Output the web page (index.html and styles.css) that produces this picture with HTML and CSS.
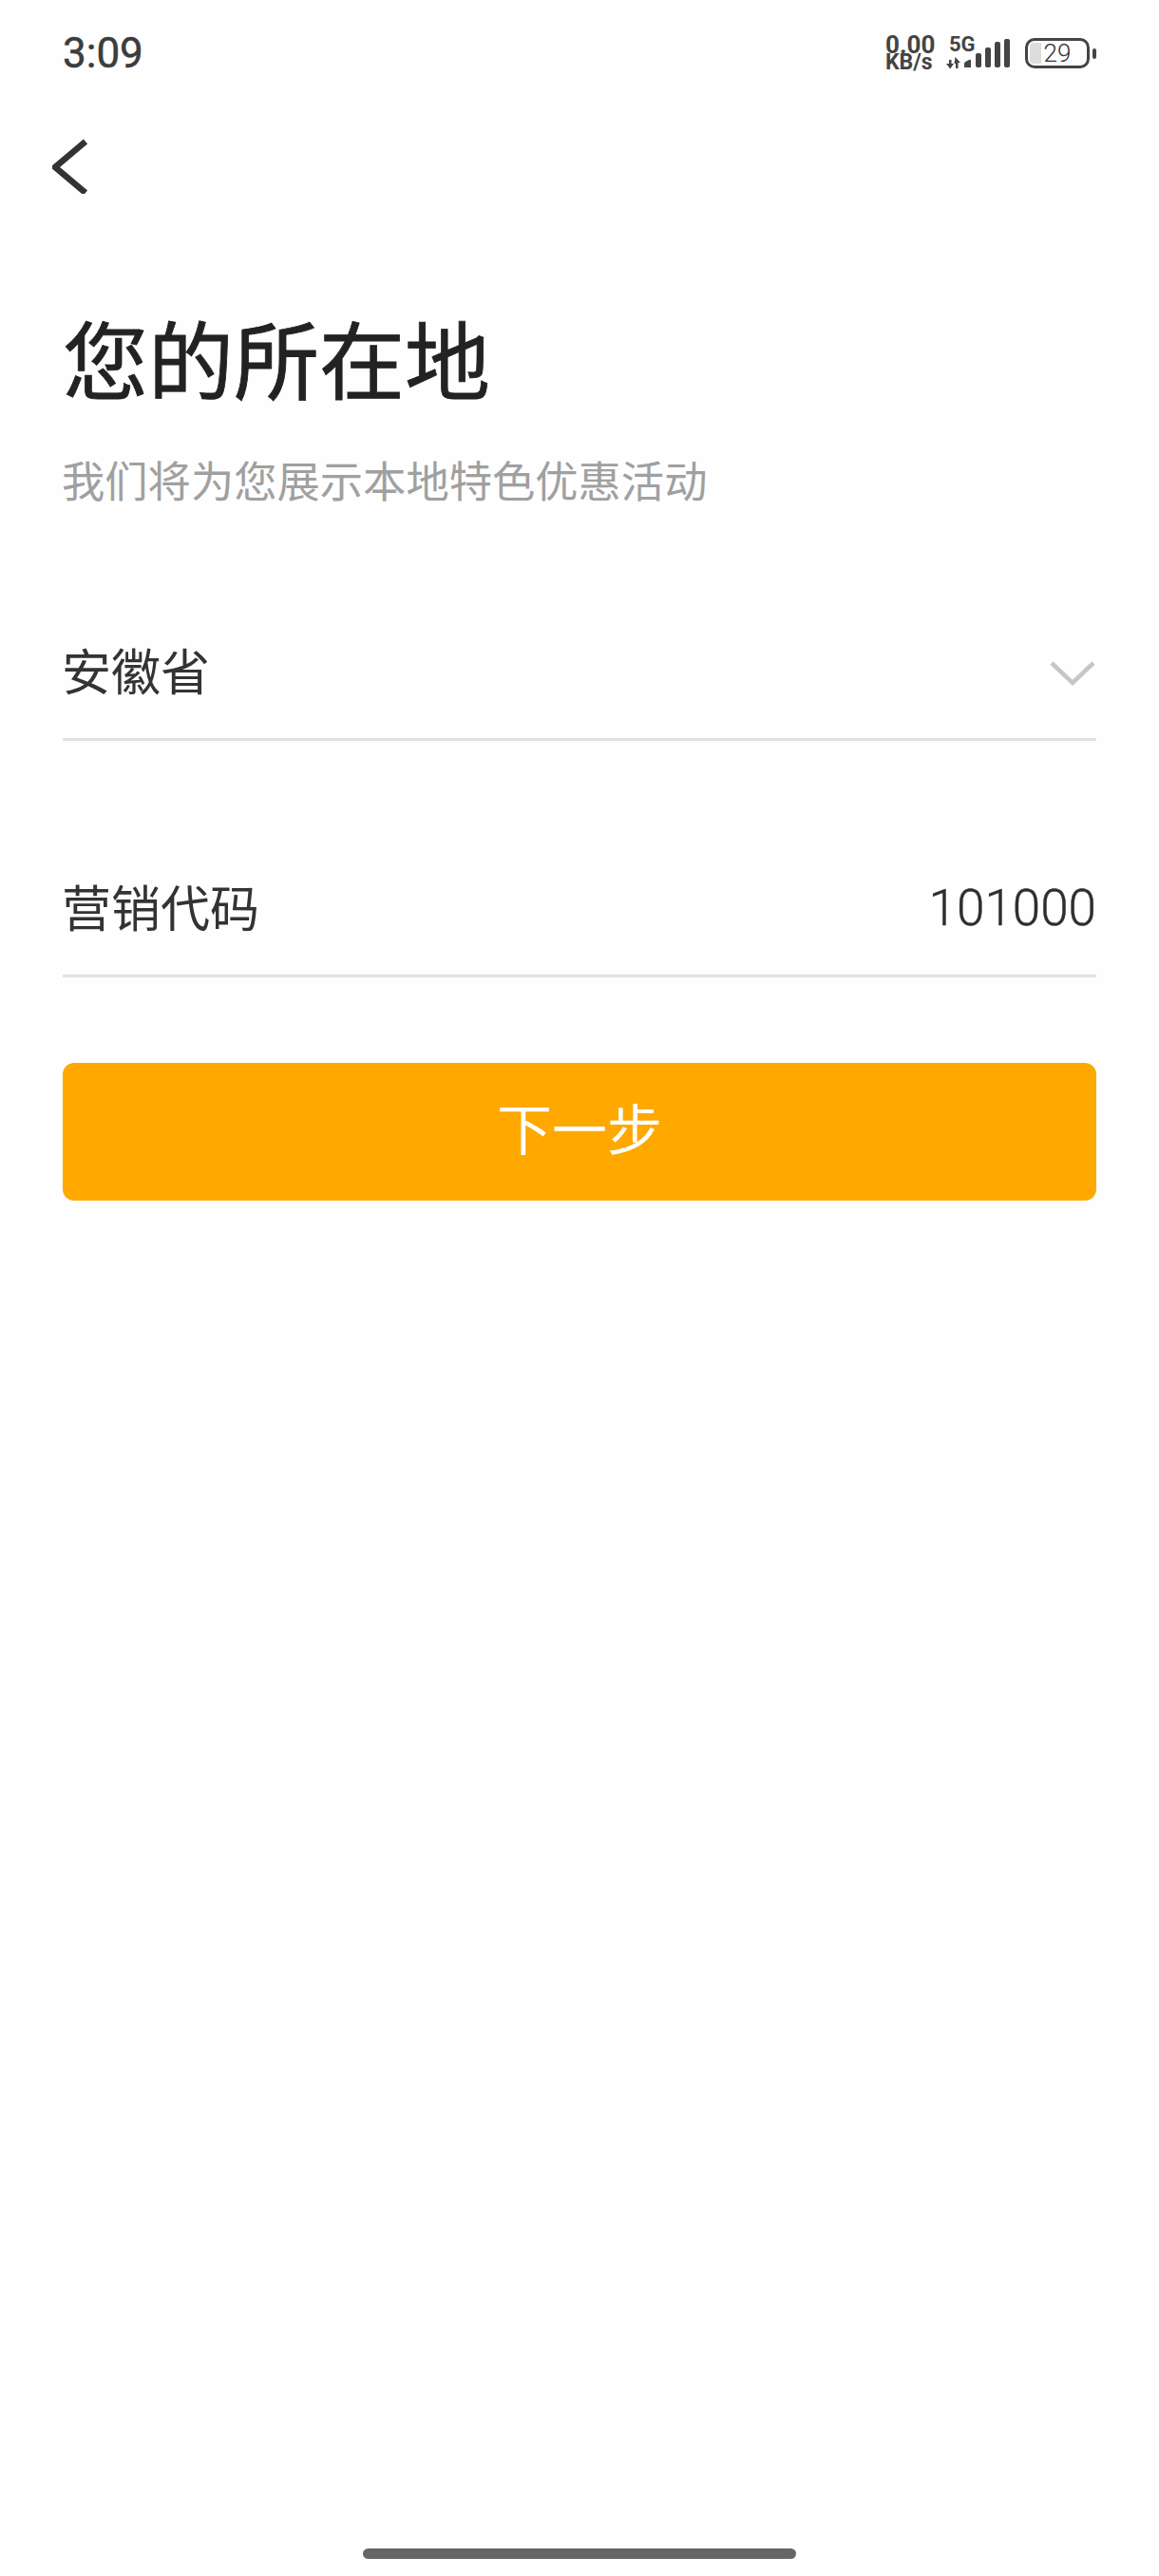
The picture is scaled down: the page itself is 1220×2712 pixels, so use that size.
FILE: index.html
```html
<!DOCTYPE html>
<html lang="zh-CN">
<head>
<meta charset="utf-8">
<title>您的所在地</title>
<link rel="stylesheet" href="styles.css">
</head>
<body>
<div class="page">
  <header class="status">
    <span class="time">3:09</span>
    <div class="status-right">
      <div class="speed"><span class="speed-num">0.00</span><span class="speed-unit">KB/s</span></div>
      <div class="net">
        <span class="net-label">5G</span>
        <svg class="net-arrows" width="16" height="13" viewBox="0 0 16 13"><path d="M3 3h2.500v4H8l-3.800 5.500L0 7h3zM9.500 0L15 6h-2.500v6H10V7H8.500z" fill="#444"/></svg>
      </div>
      <svg class="signal" width="48" height="31" viewBox="0 0 48 31"><g fill="#444"><path d="M0 30v-4q0-1 1-1.800l4-2.200q2-1 2 1v7z"/><rect x="12" y="15" width="6" height="15" rx="2"/><rect x="22" y="9" width="6" height="21" rx="2"/><rect x="32" y="3" width="6" height="27" rx="2"/><rect x="42" y="0" width="6" height="30" rx="2"/></g></svg>
      <div class="battery">
        <div class="battery-body"><span class="battery-fill"></span><span class="battery-text">29</span></div>
        <span class="battery-nub"></span>
      </div>
    </div>
  </header>

  <nav class="nav">
    <svg class="back" width="38" height="58" viewBox="0 0 38 58"><path d="M35 3L3 30l32 27" fill="none" stroke="#333" stroke-width="6.500"/></svg>
  </nav>

  <main class="content">
    <h1 class="title">您的所在地</h1>
    <p class="subtitle">我们将为您展示本地特色优惠活动</p>

    <div class="field field-select">
      <span class="field-label">安徽省</span>
      <svg class="chevron" width="48" height="28" viewBox="0 0 48 28"><path d="M2 3l22 21L46 3" fill="none" stroke="#c6c6c6" stroke-width="4.500"/></svg>
    </div>
    <div class="field field-code">
      <span class="field-label">营销代码</span>
      <span class="field-value">101000</span>
    </div>

    <button class="next" type="button">下一步</button>
  </main>

  <footer class="home"><span class="home-bar"></span></footer>
</div>
</body>
</html>
```
FILE: styles.css
```css
* { box-sizing: border-box; }
html, body { margin: 0; padding: 0; background: #fff; }
body { font-family: "Noto Sans CJK SC", "Noto Sans", sans-serif; }
.page { width: 1220px; height: 2712px; display: flex; flex-direction: column; background: #fefefe; }

.status { height: 112px; padding: 34px 66px 0 66px; display: flex; justify-content: space-between; align-items: flex-start; }
.time { font-family: Roboto, sans-serif; font-weight: 400; font-size: 44px; line-height: 44px; color: #3c3c3c; -webkit-text-stroke: 0.5px #3c3c3c; }
.status-right { display: flex; align-items: flex-start; padding-top: 4px; }
.speed { width: 52px; display: flex; flex-direction: column; font-family: Roboto, sans-serif; font-weight: 700; color: #444; }
.speed-num { font-size: 26px; line-height: 19px; }
.speed-unit { font-size: 23px; line-height: 17px; }
.net { width: 19px; margin-left: 12px; display: flex; flex-direction: column; }
.net-label { width: 30px; margin-left: 3px; font-family: Roboto, sans-serif; font-weight: 700; font-size: 22px; line-height: 17px; color: #444; }
.net-arrows { margin-top: 5px; }
.signal { margin-top: 3px; }
.battery { display: flex; align-items: center; margin-left: 16px; margin-top: 2px; height: 32px; }
.battery-body { position: relative; width: 68px; height: 32px; border: 3px solid #444; border-radius: 10px; display: flex; align-items: center; justify-content: center; }
.battery-fill { position: absolute; left: 2px; top: 2px; bottom: 2px; width: 12px; background: #ddd; border-radius: 4px 0 0 4px; }
.battery-text { position: relative; font-family: Roboto, sans-serif; font-weight: 300; font-size: 26px; line-height: 26px; color: #333; }
.battery-nub { width: 4px; height: 11px; margin-left: 3px; background: #444; border-radius: 2px; }

.nav { height: 60px; padding-left: 55px; padding-top: 34px; }
.back { display: block; }

.content { padding: 0 66px 0 66px; }
.title { margin: 149px 0 0; font-size: 90px; line-height: 108px; font-weight: 400; color: #222; -webkit-text-stroke: 0.8px #222; }
.subtitle { margin: 45px 0 0 -1px; font-size: 45.300px; line-height: 60px; color: #a0a0a0; }

.field { display: flex; justify-content: space-between; align-items: center; border-bottom: 3px solid #e2e2e2; color: #333; }
.field-label { margin-left: -1px; font-size: 52px; line-height: 72px; }
.field-select { margin-top: 114px; height: 132px; padding-bottom: 16px; }
.field-code { margin-top: 117px; height: 132px; padding-bottom: 16px; }
.chevron { margin-right: 1px; margin-top: 8px; }
.field-value { margin-top: 5px; font-family: Roboto, sans-serif; font-size: 53px; font-weight: 300; line-height: 72px; color: #2e2e2e; -webkit-text-stroke: 0.4px #2e2e2e; }

.next { display: block; width: 100%; height: 145px; margin: 90px 0 0; padding: 0 0 12px; border: 0; border-radius: 12px; background: #ffa800; color: #fff; font-family: inherit; font-size: 58px; line-height: 72px; }

.home { margin-top: auto; height: 29px; display: flex; justify-content: center; }
.home-bar { width: 456px; height: 11px; background: #666; border-radius: 6px; }
```
